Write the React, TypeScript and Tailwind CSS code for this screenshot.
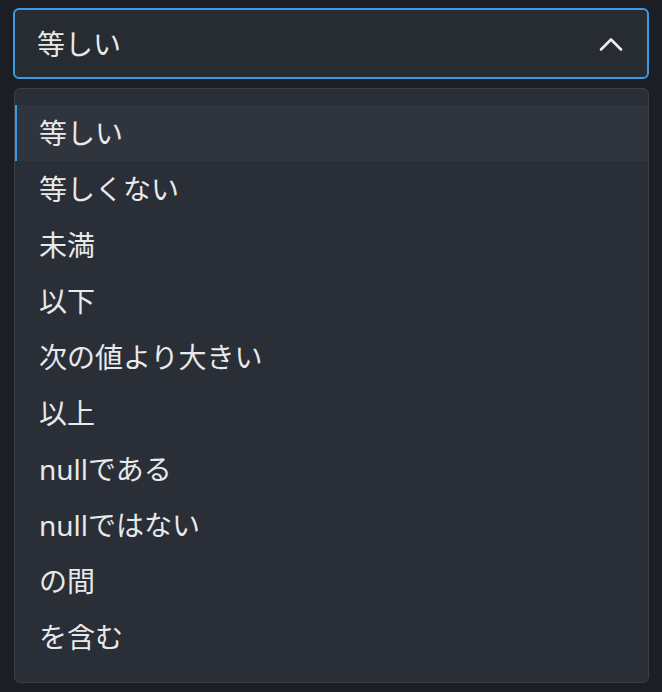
import { useState } from "react";

const options = [
  "等しい",
  "等しくない",
  "未満",
  "以下",
  "次の値より大きい",
  "以上",
  "nullである",
  "nullではない",
  "の間",
  "を含む",
];

export default function App() {
  const [selected, setSelected] = useState(0);

  return (
    <div
      className="w-[662px] h-[692px] bg-[#1b1e23] pt-2 pl-[13px] pr-[13px]"
      style={{ fontFamily: '"Noto Sans", "Noto Sans CJK JP", sans-serif' }}
    >
      {/* Trigger */}
      <button className="w-[636px] h-[71px] flex items-center justify-between rounded-md border-2 border-[#3a9be4] bg-[#272b32] pl-[22px] pr-[24px] text-[28px] text-[#e8e9ea]">
        <span>{options[selected]}</span>
        <svg width="24" height="14" viewBox="0 0 24 14" fill="none">
          <path d="M2 12.5 L12 2.5 L22 12.5" stroke="#eceef0" strokeWidth="2.6" strokeLinecap="round" strokeLinejoin="round" />
        </svg>
      </button>

      {/* Menu */}
      <div className="mt-[9px] ml-px w-[635px] h-[595px] rounded-md border border-[#3a3f47] bg-[#2a2e36] pt-4 pb-5">
        {options.map((opt, i) => (
          <div
            key={opt}
            onClick={() => setSelected(i)}
            className={`h-14 flex items-center pl-[22px] text-[28px] text-[#e8e9ea] border-l-2 ${
              i === selected ? "bg-[#30353d] border-[#3a9be4]" : "border-transparent"
            }`}
          >
            {opt}
          </div>
        ))}
      </div>
    </div>
  );
}
